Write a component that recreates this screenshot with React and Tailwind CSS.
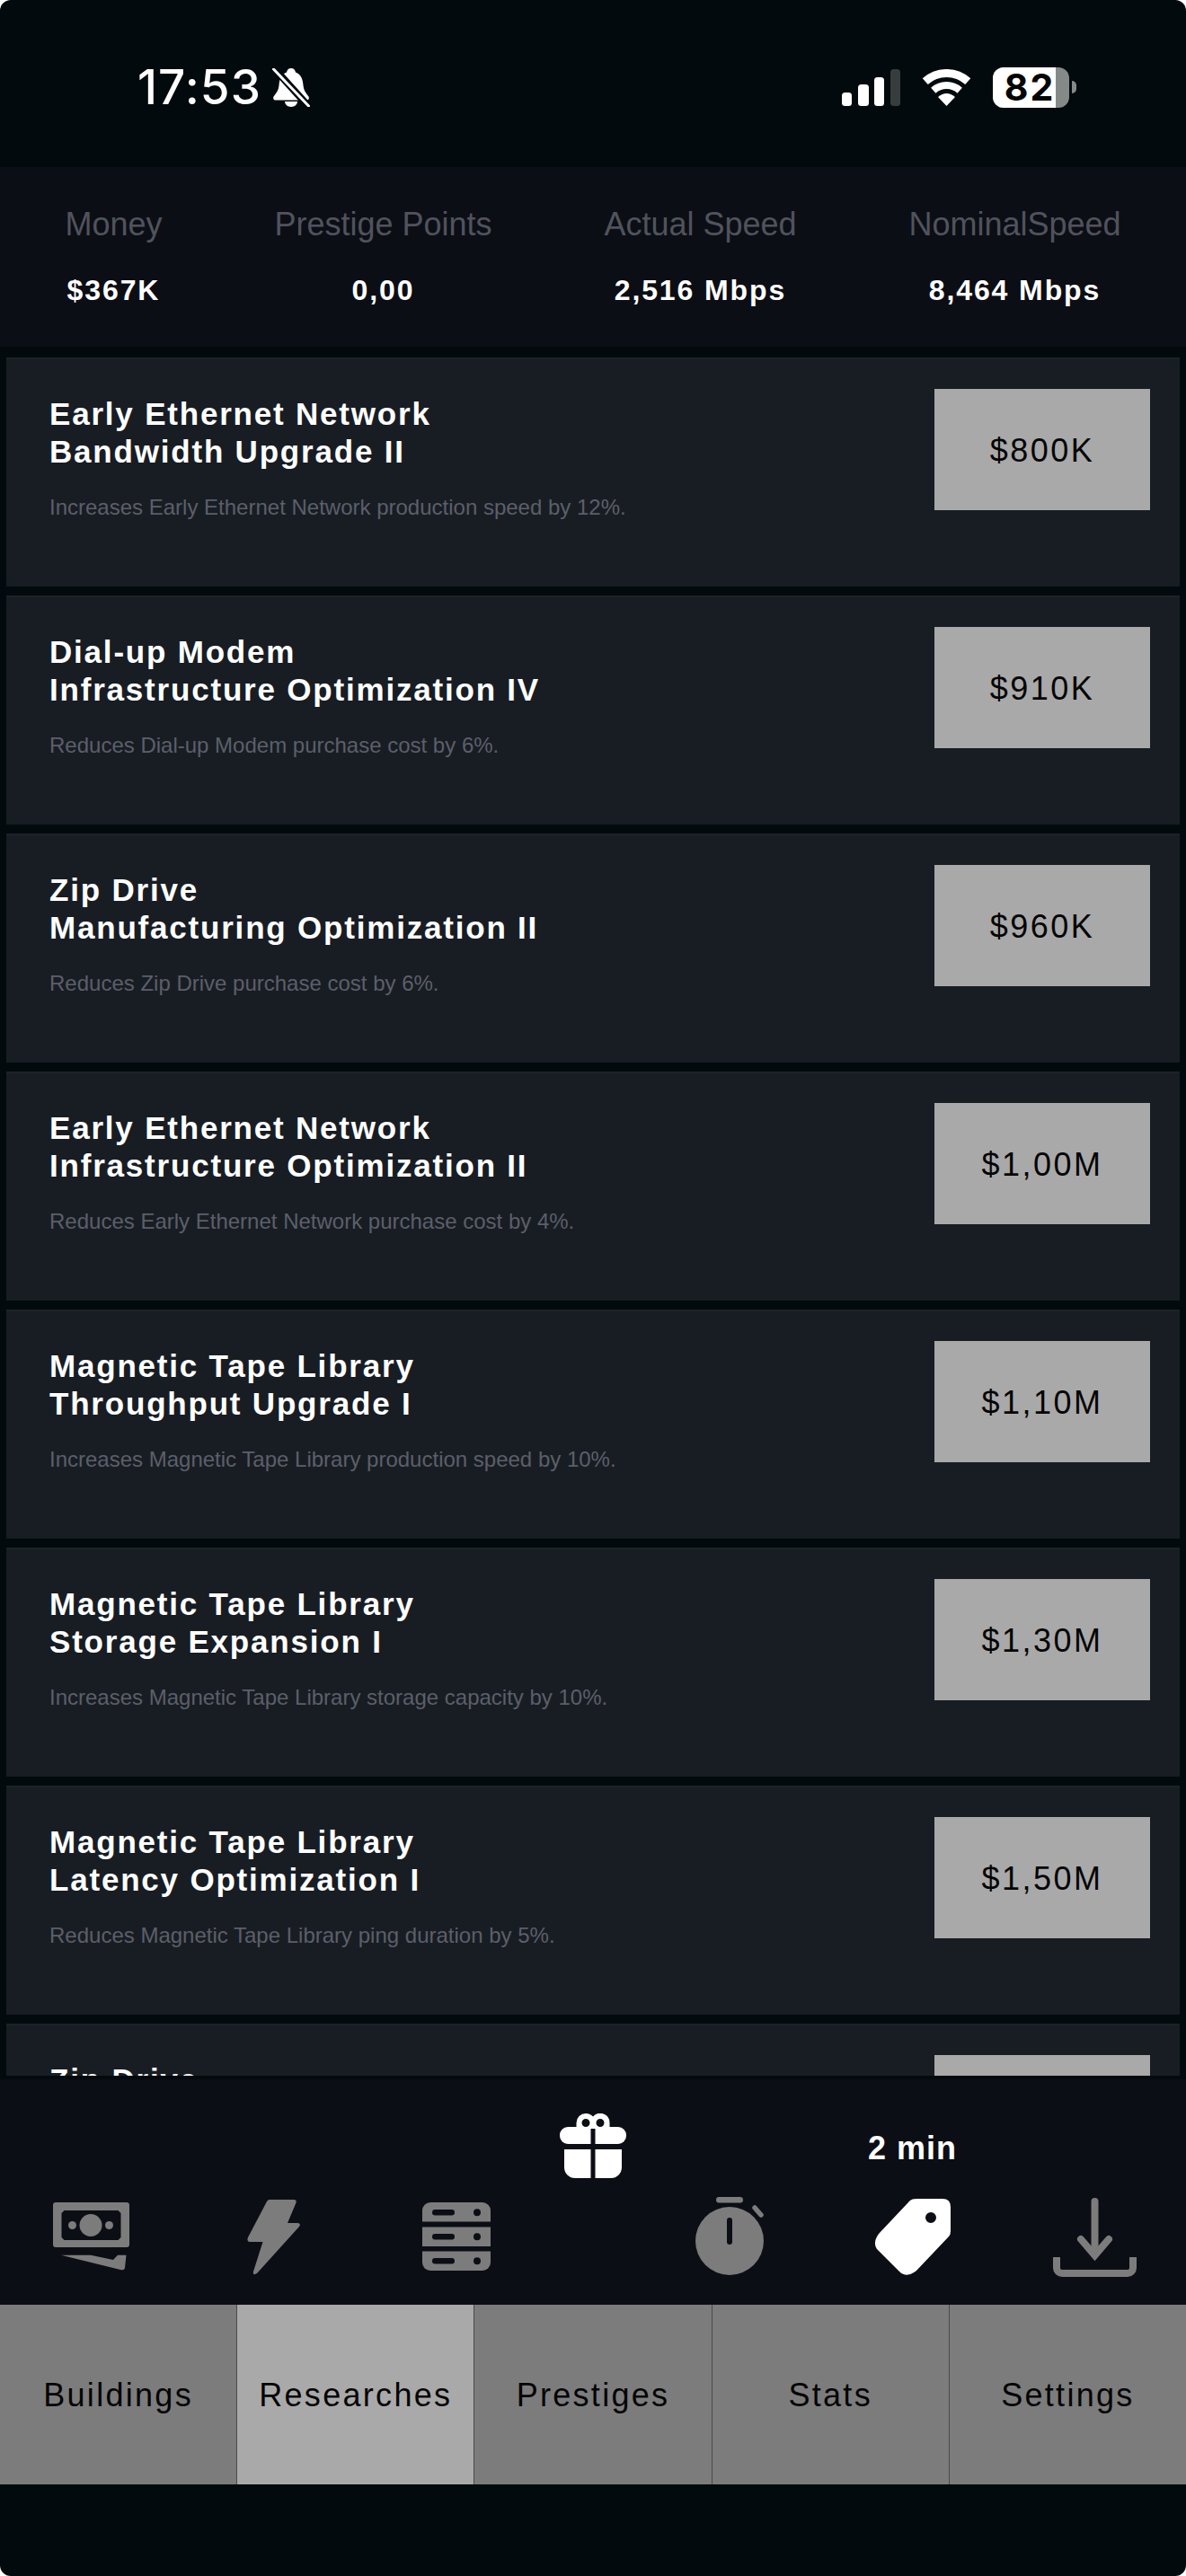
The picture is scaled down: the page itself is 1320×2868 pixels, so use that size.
const STATS = [
  { label: "Money", value: "$367K" },
  { label: "Prestige Points", value: "0,00" },
  { label: "Actual Speed", value: "2,516 Mbps" },
  { label: "NominalSpeed", value: "8,464 Mbps" },
];

const RESEARCHES = [
  { title: ["Early Ethernet Network", "Bandwidth Upgrade II"], desc: "Increases Early Ethernet Network production speed by 12%.", price: "$800K" },
  { title: ["Dial-up Modem", "Infrastructure Optimization IV"], desc: "Reduces Dial-up Modem purchase cost by 6%.", price: "$910K" },
  { title: ["Zip Drive", "Manufacturing Optimization II"], desc: "Reduces Zip Drive purchase cost by 6%.", price: "$960K" },
  { title: ["Early Ethernet Network", "Infrastructure Optimization II"], desc: "Reduces Early Ethernet Network purchase cost by 4%.", price: "$1,00M" },
  { title: ["Magnetic Tape Library", "Throughput Upgrade I"], desc: "Increases Magnetic Tape Library production speed by 10%.", price: "$1,10M" },
  { title: ["Magnetic Tape Library", "Storage Expansion I"], desc: "Increases Magnetic Tape Library storage capacity by 10%.", price: "$1,30M" },
  { title: ["Magnetic Tape Library", "Latency Optimization I"], desc: "Reduces Magnetic Tape Library ping duration by 5%.", price: "$1,50M" },
  // scrolled under the footer, only the first title line peeks out
  { title: ["Zip Drive"], desc: "", price: "" },
];

const TABS = ["Buildings", "Researches", "Prestiges", "Stats", "Settings"];

export default function App() {
  return (
    <div className="h-[2868px] w-full bg-white font-['Liberation_Sans',sans-serif]">
      <div className="flex h-full flex-col overflow-hidden rounded-[12px] bg-[#020a0d]">
        <StatusBar />

        {/* Stats header */}
        <section className="flex h-[200px] items-start justify-around bg-[#0c0e15] px-[10px] pt-[42px]">
          {STATS.map((s) => (
            <div key={s.label} className="flex flex-col items-center">
              <p className="text-[36px] leading-[44px] text-[#50535d]">{s.label}</p>
              <p className="mt-[33px] text-[32px] leading-[36px] font-bold tracking-[1.9px] text-white">{s.value}</p>
            </div>
          ))}
        </section>

        {/* Research list */}
        <section className="flex h-[1925px] flex-col gap-[10px] overflow-hidden px-[7px] pt-[12px]">
          {RESEARCHES.map((r, i) => (
            <ResearchCard key={i} item={r} />
          ))}
        </section>

        <div className="mt-[4px] flex h-[250px] bg-[#0c0e15]">
          <FooterIcon><MoneyIcon /></FooterIcon>
          <FooterIcon><BoltIcon /></FooterIcon>
          <FooterIcon><ServerIcon /></FooterIcon>
          <div className="flex w-[102px] justify-center pt-[38px]"><GiftIcon /></div>
          <FooterIcon><TimerIcon /></FooterIcon>
          <FooterIcon label="2 min"><TagIcon /></FooterIcon>
          <FooterIcon><DownloadIcon /></FooterIcon>
        </div>

        <nav className="flex h-[201px] border-t border-[#111]">
          {TABS.map((t, i) => (
            <div
              key={t}
              className={`flex flex-1 justify-center pt-[78px] text-[36px] leading-[46px] tracking-[2.3px] text-[#050505] ${i > 0 ? "border-l border-[#4a4a4a]" : ""} ${t === "Researches" ? "bg-[#a9a9a9]" : "bg-[#7c7c7c]"}`}
            >
              {t}
            </div>
          ))}
        </nav>
      </div>
    </div>
  );
}

function StatusBar() {
  return (
    <header className="flex h-[186px] shrink-0 pt-[72px] font-['Inter',sans-serif] text-white">
      <div className="ml-[153px] flex h-[50px] items-center">
        <span className="text-[53px] leading-[50px] font-medium tracking-[1.1px]">17:53</span>
        <BellOffIcon />
      </div>
      <div className="ml-auto mr-[122px] flex h-[50px] items-center">
        <SignalIcon />
        <WifiIcon />
        <div className="ml-[23px] flex h-[45px] w-[85px] items-center rounded-[12px] bg-[#858a89]">
          <div className="flex h-full w-[70px] items-center justify-center rounded-l-[12px] bg-white pl-[12px] text-[41px] leading-none font-bold tracking-[2px] text-[#050505]">82</div>
        </div>
        <div className="ml-[3px] h-[14px] w-[5px] rounded-r-full bg-[#858a89]" />
      </div>
    </header>
  );
}

function ResearchCard({ item }) {
  return (
    <article className="flex h-[255px] shrink-0 justify-between border-t-2 border-[#1e2226] bg-[#181d24] pt-[33px] pr-[33px] pl-[48px]">
      <div className="pt-[7px]">
        <h3 className="text-[35px] leading-[42px] font-bold tracking-[1.8px] text-white">
          {item.title.map((line, i) => (
            <span key={i} className="block">{line}</span>
          ))}
        </h3>
        {item.desc && <p className="mt-[27px] text-[24px] leading-[28px] text-[#5c5f69]">{item.desc}</p>}
      </div>
      <div className="flex h-[135px] w-[240px] shrink-0 items-center justify-center bg-[#a9a9a9] pt-[2px] text-[36px] tracking-[2.5px] text-[#050505]">
        {item.price}
      </div>
    </article>
  );
}

function FooterIcon({ label, children }) {
  return (
    <div className="relative flex flex-1 items-end justify-center pb-[32px]">
      {label && <span className="absolute top-[55px] text-[36px] leading-[44px] font-bold tracking-[1px] text-white">{label}</span>}
      {children}
    </div>
  );
}

function BellOffIcon() {
  return (
    <svg width="42" height="43" viewBox="0 0 42 43" className="ml-[12px]">
      <path d="M21 0c3 0 4.500 2 5 4.500C32 7 34 12 34.500 19c.5 6 3.500 9 6 12.500 1 2 0 4-2 4H3.500c-2 0-3-2-2-4C4 28 7 25 7.500 19 8 12 10 7 16 4.500 16.500 2 18 0 21 0z" fill="#fff" />
      <path d="M14 37h14c0 3-3 6-7 6s-7-3-7-6z" fill="#fff" />
      <path d="M2 0 L40 42" stroke="#020a0d" strokeWidth="8" />
      <path d="M1.500 1 L40.500 42" stroke="#fff" strokeWidth="3" strokeLinecap="round" />
    </svg>
  );
}

function SignalIcon() {
  return (
    <svg width="65" height="41" viewBox="0 0 65 41">
      <rect x="0" y="26" width="11" height="15" rx="3.500" fill="#fff" />
      <rect x="18" y="17" width="12" height="24" rx="3.500" fill="#fff" />
      <rect x="36" y="9" width="11" height="32" rx="3.500" fill="#fff" />
      <rect x="54" y="0" width="11" height="41" rx="3.500" fill="#373d3c" />
    </svg>
  );
}

function WifiIcon() {
  return (
    <svg width="57" height="41" viewBox="0 0 57 41" className="ml-[23px]" fill="none">
      <path d="M4.750 13.600A35.500 35.500 0 0 1 52.250 13.600" stroke="#fff" strokeWidth="9" />
      <path d="M13.800 23.700A22 22 0 0 1 43.200 23.700" stroke="#fff" strokeWidth="8" />
      <path d="M28.500 41L19 31Q28.500 23 38 31Z" fill="#fff" />
    </svg>
  );
}

function MoneyIcon() {
  return (
    <svg width="85" height="76" viewBox="0 0 85 76" className="mr-[1px] mb-[5px]">
      <path
        fillRule="evenodd"
        d="M3 0H82a3 3 0 0 1 3 3V47a3 3 0 0 1-3 3H3a3 3 0 0 1-3-3V3a3 3 0 0 1 3-3zM12.500 9L9.500 12V39L12.500 42H72.500L75.500 39V12L72.500 9z"
        fill="#7c7c7c"
      />
      <circle cx="42" cy="25.500" r="12.500" fill="#7c7c7c" />
      <circle cx="21.500" cy="25.500" r="4.500" fill="#7c7c7c" />
      <circle cx="62.500" cy="25.500" r="4.500" fill="#7c7c7c" />
      <path d="M9 58.700H42L67 64L72 58.700H81.500L80 73Q79.500 76 75 75Z" fill="#7c7c7c" />
    </svg>
  );
}

function BoltIcon() {
  return (
    <svg width="60" height="85" viewBox="0 0 60 85">
      <path d="M25 1H52Q55.500 1 54.500 4.500L45 27H56Q60.500 27 58 31L11 83Q6 86 7 81L17.500 48H4Q-1 48 1 43L22 3Q23 1 25 1Z" fill="#7c7c7c" />
    </svg>
  );
}

function ServerIcon() {
  const Slots = ({ y }) => (
    <>
      <rect x="11" y={y} width="25" height="6.500" rx="3.250" fill="#0c0e15" />
      <circle cx="61" cy={y + 3.250} r="4" fill="#0c0e15" />
    </>
  );
  return (
    <svg width="76" height="76" viewBox="0 0 76 76" className="mb-[5px]">
      <path d="M9 0H67a9 9 0 0 1 9 9V21.500H0V9a9 9 0 0 1 9-9z" fill="#7c7c7c" />
      <rect x="0" y="27.500" width="76" height="21.500" fill="#7c7c7c" />
      <path d="M0 54.500H76V67a9 9 0 0 1-9 9H9a9 9 0 0 1-9-9z" fill="#7c7c7c" />
      <Slots y={8} />
      <Slots y={35} />
      <Slots y={62} />
    </svg>
  );
}

function TimerIcon() {
  return (
    <svg width="78" height="87" viewBox="0 0 78 87">
      <rect x="23" y="0" width="30" height="6.500" rx="3.250" fill="#7c7c7c" />
      <path d="M66 12L73 20" stroke="#7c7c7c" strokeWidth="5.500" strokeLinecap="round" />
      <circle cx="38" cy="49" r="38" fill="#7c7c7c" />
      <rect x="35" y="23" width="6" height="30" rx="3" fill="#0c0e15" />
    </svg>
  );
}

function TagIcon() {
  return (
    <svg width="85" height="85" viewBox="0 0 85 85">
      <path
        fillRule="evenodd"
        d="M38 4Q41 0 47 0H76Q85 0 85 9V36Q85 40 83 42L47 80Q36 89 28 81L3 56Q-2 49 5 39ZM63 15A6 6 0 1 0 63 27A6 6 0 1 0 63 15Z"
        fill="#fff"
      />
    </svg>
  );
}

function DownloadIcon() {
  return (
    <svg width="93" height="88" viewBox="0 0 93 88" fill="none" className="mb-[-2px]">
      <path d="M46.500 4V62" stroke="#7c7c7c" strokeWidth="8" strokeLinecap="round" />
      <path d="M31 46L46.500 64L62 46" stroke="#7c7c7c" strokeWidth="8" strokeLinecap="round" />
      <path d="M4 66V78a6 6 0 0 0 6 6H83a6 6 0 0 0 6-6V66" stroke="#7c7c7c" strokeWidth="8" />
    </svg>
  );
}

function GiftIcon() {
  return (
    <svg width="74" height="72" viewBox="0 0 74 72">
      <path fillRule="evenodd" d="M29 0A10.500 10.500 0 0 0 18.500 10.500V16H55.500V10.500A10.500 10.500 0 0 0 37 3.600 10.500 10.500 0 0 0 29 0zM29 6A4.500 4.500 0 1 1 29 15A4.500 4.500 0 1 1 29 6zM45 6A4.500 4.500 0 1 1 45 15A4.500 4.500 0 1 1 45 6z" fill="#fff" />
      <rect x="0" y="15" width="74" height="19" rx="9" fill="#fff" />
      <path d="M5 40H69V60a12 12 0 0 1-12 12H17a12 12 0 0 1-12-12z" fill="#fff" />
      <rect x="34.500" y="17" width="5" height="55" fill="#0c0e15" />
    </svg>
  );
}
